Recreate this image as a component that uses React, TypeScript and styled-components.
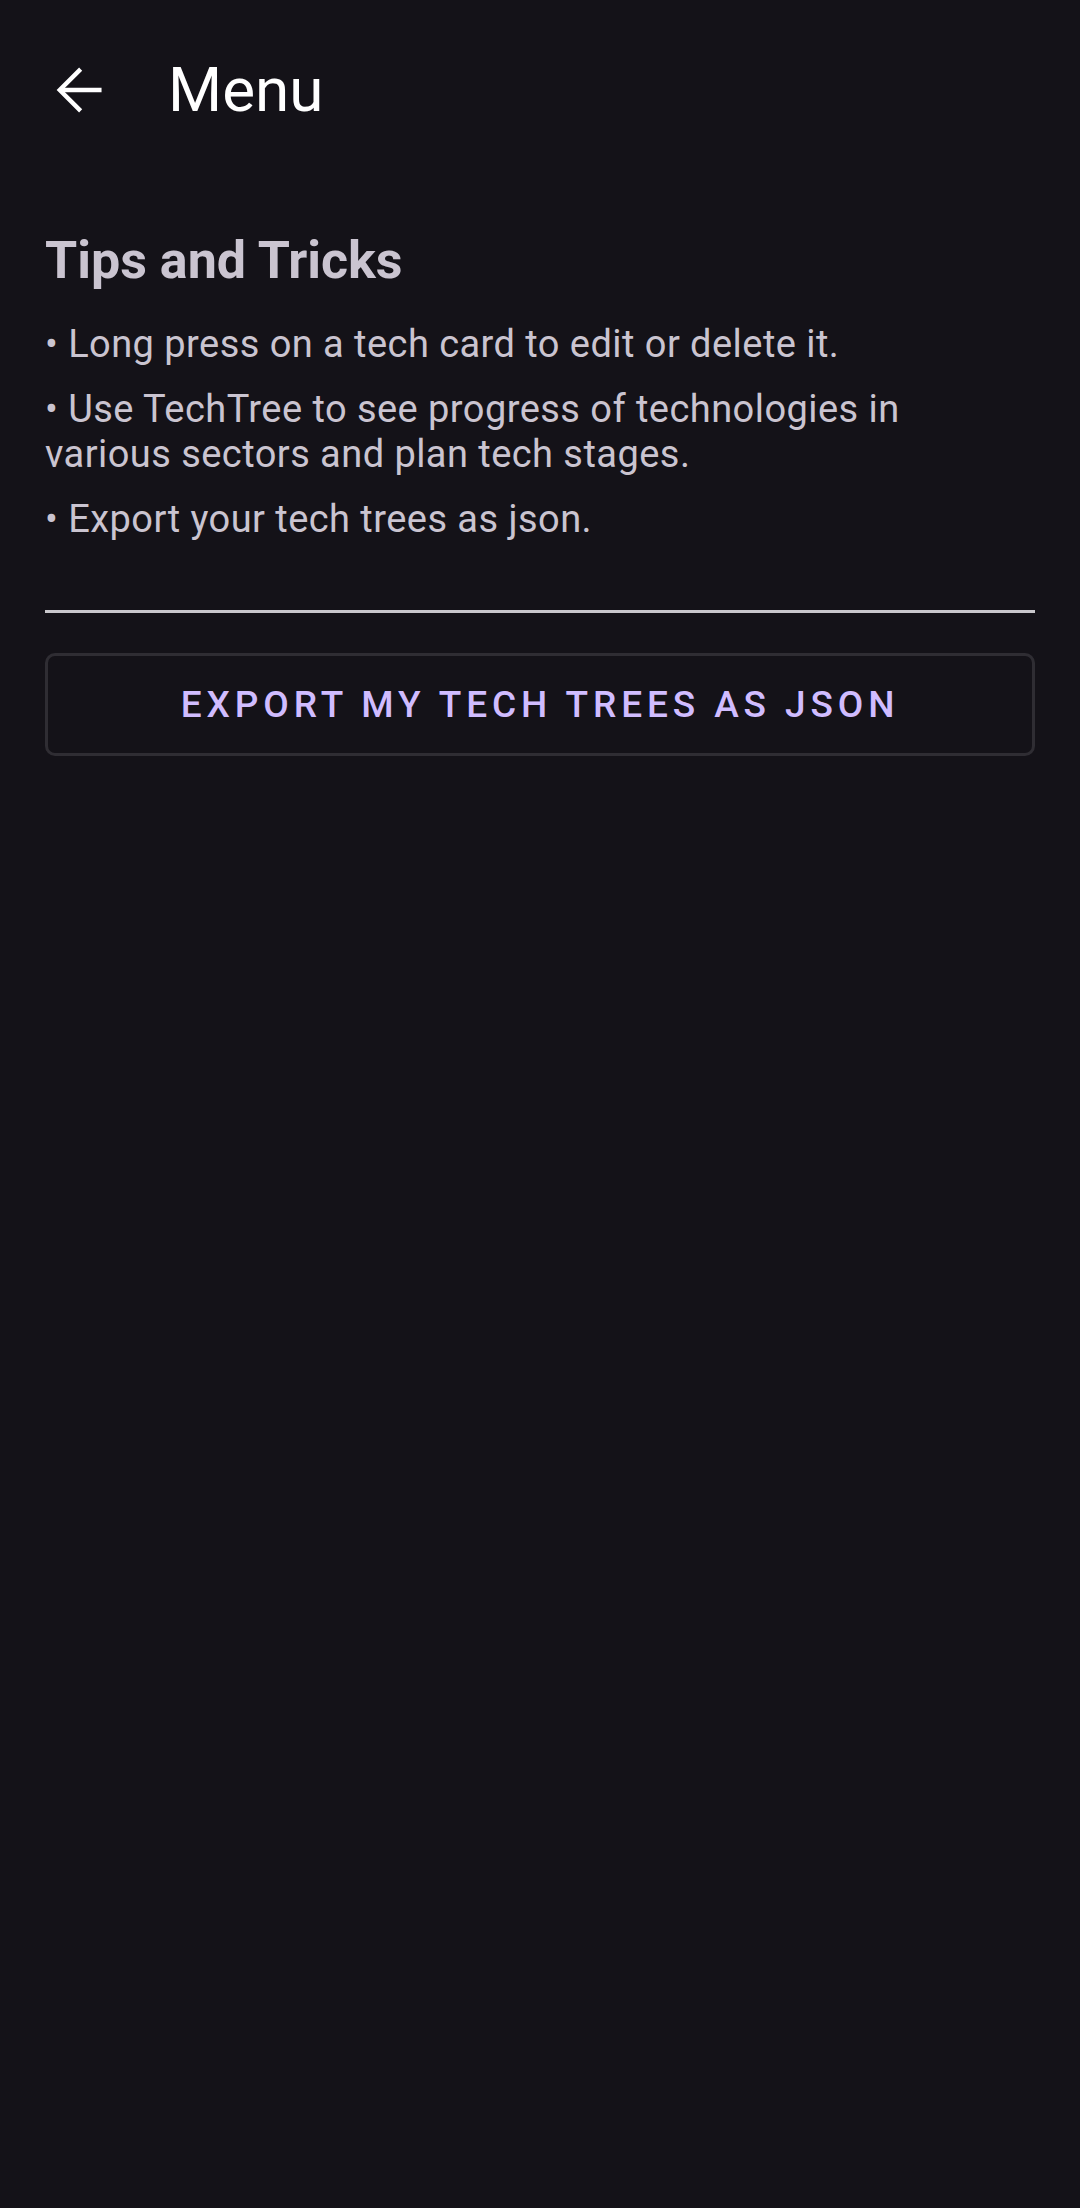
import React from "react";
import styled, { createGlobalStyle } from "styled-components";

const Global = createGlobalStyle`
  html, body {
    margin: 0;
    padding: 0;
    background: #141218;
  }
  body {
    font-family: Roboto, "Noto Sans", "Liberation Sans", sans-serif;
    -webkit-font-smoothing: antialiased;
  }
`;

const Screen = styled.div`
  width: 1080px;
  min-height: 2208px;
  background: #141218;
  display: flex;
  flex-direction: column;
`;

const TopBar = styled.header`
  height: 180px;
  display: flex;
  align-items: center;
  padding-left: 46px;
  gap: 56px;
  box-sizing: border-box;
`;

const BackButton = styled.button`
  width: 66px;
  height: 66px;
  padding: 0;
  border: none;
  background: transparent;
  display: flex;
  align-items: center;
  justify-content: center;
  color: #ffffff;
`;

const Title = styled.h1`
  margin: 0;
  font-size: 62px;
  font-weight: 400;
  color: #ffffff;
  line-height: 72px;
`;

const Content = styled.main`
  padding: 50px 45px 0 45px;
  display: flex;
  flex-direction: column;
`;

const SectionTitle = styled.h2`
  margin: 0 0 31px 0;
  font-size: 52px;
  font-weight: 700;
  line-height: 61px;
  color: #cac4d0;
`;

const TipList = styled.div`
  display: flex;
  flex-direction: column;
  gap: 20px;
`;

const Tip = styled.p`
  margin: 0;
  font-size: 38px;
  line-height: 45px;
  letter-spacing: 0.45px;
  color: #cac4d0;
  padding-right: 40px;
`;

const Divider = styled.hr`
  margin: 68px 0 0 0;
  border: none;
  height: 3px;
  background: #c9c7cc;
`;

const OutlineButton = styled.button`
  margin-top: 40px;
  height: 103px;
  border: 3px solid #2f2d33;
  border-radius: 10px;
  background: transparent;
  color: #d0bcff;
  font-family: Roboto, "Noto Sans", "Liberation Sans", sans-serif;
  font-size: 37px;
  font-weight: 500;
  letter-spacing: 4.9px;
  text-transform: uppercase;
  display: flex;
  align-items: center;
  justify-content: center;
`;

const ArrowBack = () => (
  <svg width="66" height="66" viewBox="0 0 24 24" fill="none" stroke="currentColor" strokeWidth="1.6">
    <path d="M20.2 12H5" />
    <path d="M12.6 4.4L5 12l7.6 7.6" />
  </svg>
);

export default function App() {
  return (
    <Screen>
      <Global />
      <TopBar>
        <BackButton aria-label="Back">
          <ArrowBack />
        </BackButton>
        <Title>Menu</Title>
      </TopBar>
      <Content>
        <SectionTitle>Tips and Tricks</SectionTitle>
        <TipList>
          <Tip>• Long press on a tech card to edit or delete it.</Tip>
          <Tip>• Use TechTree to see progress of technologies in various sectors and plan tech stages.</Tip>
          <Tip>• Export your tech trees as json.</Tip>
        </TipList>
        <Divider />
        <OutlineButton>Export my tech trees as json</OutlineButton>
      </Content>
    </Screen>
  );
}
